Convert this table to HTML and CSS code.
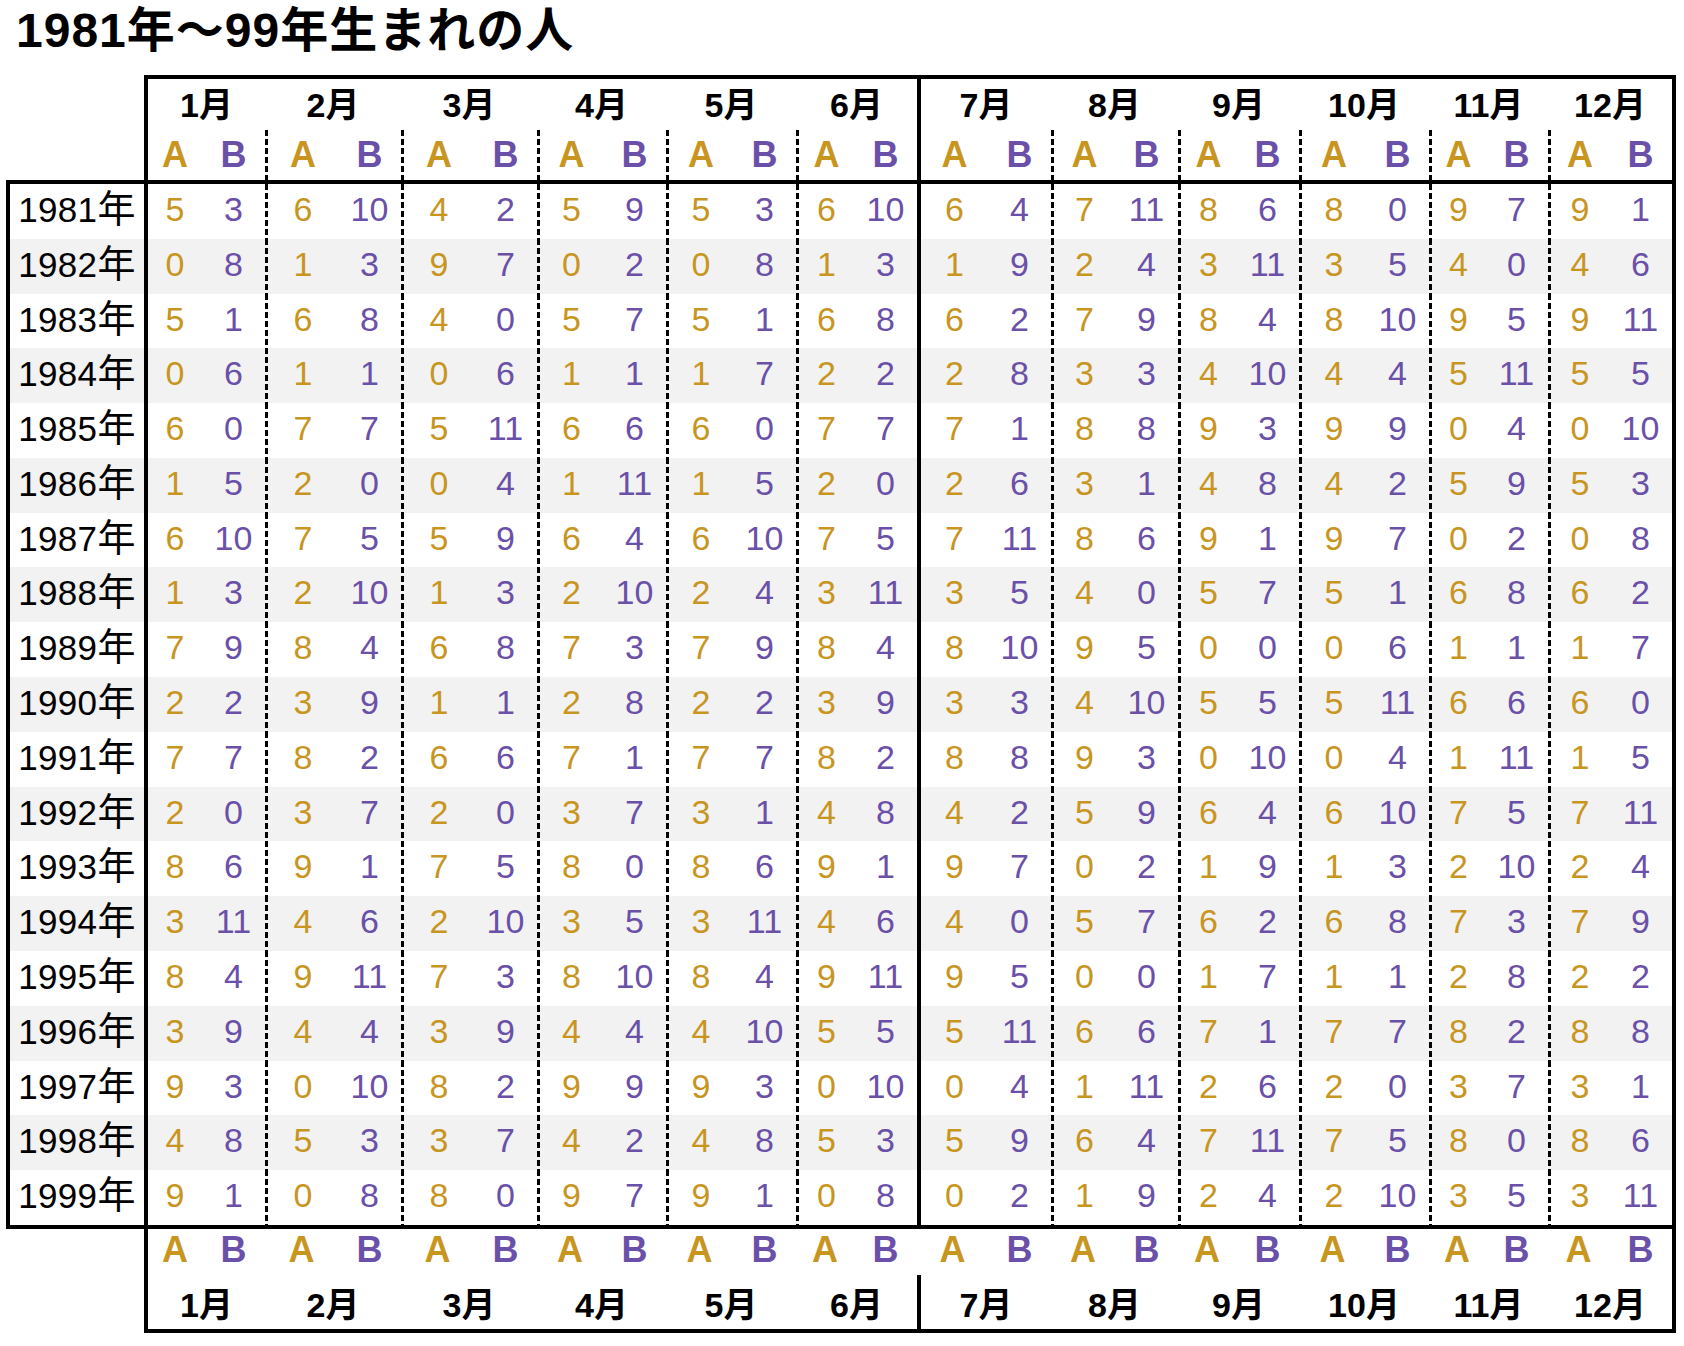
FILE: index.html
```html
<!DOCTYPE html>
<html lang="ja">
<head>
<meta charset="utf-8">
<title>1981年～99年生まれの人</title>
<link rel="stylesheet" href="styles.css">
</head>
<body>
<div class="page">
<h1 class="title">1981年～99年生まれの人</h1>

<div class="hdr">
  <div class="mrow">
    <div class="m m1">1月</div><div class="m m2">2月</div><div class="m m3">3月</div><div class="m m4">4月</div><div class="m m5">5月</div><div class="m m6">6月</div><div class="m m7 solid">7月</div><div class="m m8">8月</div><div class="m m9">9月</div><div class="m m10">10月</div><div class="m m11">11月</div><div class="m m12">12月</div>
  </div>
  <div class="abrow">
    <div class="m m1"><span class="a">A</span><span class="b">B</span></div><div class="m m2 dot"><span class="a">A</span><span class="b">B</span></div><div class="m m3 dot"><span class="a">A</span><span class="b">B</span></div><div class="m m4 dot"><span class="a">A</span><span class="b">B</span></div><div class="m m5 dot"><span class="a">A</span><span class="b">B</span></div><div class="m m6 dot"><span class="a">A</span><span class="b">B</span></div><div class="m m7 solid"><span class="a">A</span><span class="b">B</span></div><div class="m m8 dot"><span class="a">A</span><span class="b">B</span></div><div class="m m9 dot"><span class="a">A</span><span class="b">B</span></div><div class="m m10 dot"><span class="a">A</span><span class="b">B</span></div><div class="m m11 dot"><span class="a">A</span><span class="b">B</span></div><div class="m m12 dot"><span class="a">A</span><span class="b">B</span></div>
  </div>
</div>

<div class="tbl">
<div class="row"><div class="yr">1981<span class="nen">年</span></div><div class="m m1"><span class="a">5</span><span class="b">3</span></div><div class="m m2 dot"><span class="a">6</span><span class="b">10</span></div><div class="m m3 dot"><span class="a">4</span><span class="b">2</span></div><div class="m m4 dot"><span class="a">5</span><span class="b">9</span></div><div class="m m5 dot"><span class="a">5</span><span class="b">3</span></div><div class="m m6 dot"><span class="a">6</span><span class="b">10</span></div><div class="m m7 solid"><span class="a">6</span><span class="b">4</span></div><div class="m m8 dot"><span class="a">7</span><span class="b">11</span></div><div class="m m9 dot"><span class="a">8</span><span class="b">6</span></div><div class="m m10 dot"><span class="a">8</span><span class="b">0</span></div><div class="m m11 dot"><span class="a">9</span><span class="b">7</span></div><div class="m m12 dot"><span class="a">9</span><span class="b">1</span></div></div>
<div class="row alt"><div class="yr">1982<span class="nen">年</span></div><div class="m m1"><span class="a">0</span><span class="b">8</span></div><div class="m m2 dot"><span class="a">1</span><span class="b">3</span></div><div class="m m3 dot"><span class="a">9</span><span class="b">7</span></div><div class="m m4 dot"><span class="a">0</span><span class="b">2</span></div><div class="m m5 dot"><span class="a">0</span><span class="b">8</span></div><div class="m m6 dot"><span class="a">1</span><span class="b">3</span></div><div class="m m7 solid"><span class="a">1</span><span class="b">9</span></div><div class="m m8 dot"><span class="a">2</span><span class="b">4</span></div><div class="m m9 dot"><span class="a">3</span><span class="b">11</span></div><div class="m m10 dot"><span class="a">3</span><span class="b">5</span></div><div class="m m11 dot"><span class="a">4</span><span class="b">0</span></div><div class="m m12 dot"><span class="a">4</span><span class="b">6</span></div></div>
<div class="row"><div class="yr">1983<span class="nen">年</span></div><div class="m m1"><span class="a">5</span><span class="b">1</span></div><div class="m m2 dot"><span class="a">6</span><span class="b">8</span></div><div class="m m3 dot"><span class="a">4</span><span class="b">0</span></div><div class="m m4 dot"><span class="a">5</span><span class="b">7</span></div><div class="m m5 dot"><span class="a">5</span><span class="b">1</span></div><div class="m m6 dot"><span class="a">6</span><span class="b">8</span></div><div class="m m7 solid"><span class="a">6</span><span class="b">2</span></div><div class="m m8 dot"><span class="a">7</span><span class="b">9</span></div><div class="m m9 dot"><span class="a">8</span><span class="b">4</span></div><div class="m m10 dot"><span class="a">8</span><span class="b">10</span></div><div class="m m11 dot"><span class="a">9</span><span class="b">5</span></div><div class="m m12 dot"><span class="a">9</span><span class="b">11</span></div></div>
<div class="row alt"><div class="yr">1984<span class="nen">年</span></div><div class="m m1"><span class="a">0</span><span class="b">6</span></div><div class="m m2 dot"><span class="a">1</span><span class="b">1</span></div><div class="m m3 dot"><span class="a">0</span><span class="b">6</span></div><div class="m m4 dot"><span class="a">1</span><span class="b">1</span></div><div class="m m5 dot"><span class="a">1</span><span class="b">7</span></div><div class="m m6 dot"><span class="a">2</span><span class="b">2</span></div><div class="m m7 solid"><span class="a">2</span><span class="b">8</span></div><div class="m m8 dot"><span class="a">3</span><span class="b">3</span></div><div class="m m9 dot"><span class="a">4</span><span class="b">10</span></div><div class="m m10 dot"><span class="a">4</span><span class="b">4</span></div><div class="m m11 dot"><span class="a">5</span><span class="b">11</span></div><div class="m m12 dot"><span class="a">5</span><span class="b">5</span></div></div>
<div class="row"><div class="yr">1985<span class="nen">年</span></div><div class="m m1"><span class="a">6</span><span class="b">0</span></div><div class="m m2 dot"><span class="a">7</span><span class="b">7</span></div><div class="m m3 dot"><span class="a">5</span><span class="b">11</span></div><div class="m m4 dot"><span class="a">6</span><span class="b">6</span></div><div class="m m5 dot"><span class="a">6</span><span class="b">0</span></div><div class="m m6 dot"><span class="a">7</span><span class="b">7</span></div><div class="m m7 solid"><span class="a">7</span><span class="b">1</span></div><div class="m m8 dot"><span class="a">8</span><span class="b">8</span></div><div class="m m9 dot"><span class="a">9</span><span class="b">3</span></div><div class="m m10 dot"><span class="a">9</span><span class="b">9</span></div><div class="m m11 dot"><span class="a">0</span><span class="b">4</span></div><div class="m m12 dot"><span class="a">0</span><span class="b">10</span></div></div>
<div class="row alt"><div class="yr">1986<span class="nen">年</span></div><div class="m m1"><span class="a">1</span><span class="b">5</span></div><div class="m m2 dot"><span class="a">2</span><span class="b">0</span></div><div class="m m3 dot"><span class="a">0</span><span class="b">4</span></div><div class="m m4 dot"><span class="a">1</span><span class="b">11</span></div><div class="m m5 dot"><span class="a">1</span><span class="b">5</span></div><div class="m m6 dot"><span class="a">2</span><span class="b">0</span></div><div class="m m7 solid"><span class="a">2</span><span class="b">6</span></div><div class="m m8 dot"><span class="a">3</span><span class="b">1</span></div><div class="m m9 dot"><span class="a">4</span><span class="b">8</span></div><div class="m m10 dot"><span class="a">4</span><span class="b">2</span></div><div class="m m11 dot"><span class="a">5</span><span class="b">9</span></div><div class="m m12 dot"><span class="a">5</span><span class="b">3</span></div></div>
<div class="row"><div class="yr">1987<span class="nen">年</span></div><div class="m m1"><span class="a">6</span><span class="b">10</span></div><div class="m m2 dot"><span class="a">7</span><span class="b">5</span></div><div class="m m3 dot"><span class="a">5</span><span class="b">9</span></div><div class="m m4 dot"><span class="a">6</span><span class="b">4</span></div><div class="m m5 dot"><span class="a">6</span><span class="b">10</span></div><div class="m m6 dot"><span class="a">7</span><span class="b">5</span></div><div class="m m7 solid"><span class="a">7</span><span class="b">11</span></div><div class="m m8 dot"><span class="a">8</span><span class="b">6</span></div><div class="m m9 dot"><span class="a">9</span><span class="b">1</span></div><div class="m m10 dot"><span class="a">9</span><span class="b">7</span></div><div class="m m11 dot"><span class="a">0</span><span class="b">2</span></div><div class="m m12 dot"><span class="a">0</span><span class="b">8</span></div></div>
<div class="row alt"><div class="yr">1988<span class="nen">年</span></div><div class="m m1"><span class="a">1</span><span class="b">3</span></div><div class="m m2 dot"><span class="a">2</span><span class="b">10</span></div><div class="m m3 dot"><span class="a">1</span><span class="b">3</span></div><div class="m m4 dot"><span class="a">2</span><span class="b">10</span></div><div class="m m5 dot"><span class="a">2</span><span class="b">4</span></div><div class="m m6 dot"><span class="a">3</span><span class="b">11</span></div><div class="m m7 solid"><span class="a">3</span><span class="b">5</span></div><div class="m m8 dot"><span class="a">4</span><span class="b">0</span></div><div class="m m9 dot"><span class="a">5</span><span class="b">7</span></div><div class="m m10 dot"><span class="a">5</span><span class="b">1</span></div><div class="m m11 dot"><span class="a">6</span><span class="b">8</span></div><div class="m m12 dot"><span class="a">6</span><span class="b">2</span></div></div>
<div class="row"><div class="yr">1989<span class="nen">年</span></div><div class="m m1"><span class="a">7</span><span class="b">9</span></div><div class="m m2 dot"><span class="a">8</span><span class="b">4</span></div><div class="m m3 dot"><span class="a">6</span><span class="b">8</span></div><div class="m m4 dot"><span class="a">7</span><span class="b">3</span></div><div class="m m5 dot"><span class="a">7</span><span class="b">9</span></div><div class="m m6 dot"><span class="a">8</span><span class="b">4</span></div><div class="m m7 solid"><span class="a">8</span><span class="b">10</span></div><div class="m m8 dot"><span class="a">9</span><span class="b">5</span></div><div class="m m9 dot"><span class="a">0</span><span class="b">0</span></div><div class="m m10 dot"><span class="a">0</span><span class="b">6</span></div><div class="m m11 dot"><span class="a">1</span><span class="b">1</span></div><div class="m m12 dot"><span class="a">1</span><span class="b">7</span></div></div>
<div class="row alt"><div class="yr">1990<span class="nen">年</span></div><div class="m m1"><span class="a">2</span><span class="b">2</span></div><div class="m m2 dot"><span class="a">3</span><span class="b">9</span></div><div class="m m3 dot"><span class="a">1</span><span class="b">1</span></div><div class="m m4 dot"><span class="a">2</span><span class="b">8</span></div><div class="m m5 dot"><span class="a">2</span><span class="b">2</span></div><div class="m m6 dot"><span class="a">3</span><span class="b">9</span></div><div class="m m7 solid"><span class="a">3</span><span class="b">3</span></div><div class="m m8 dot"><span class="a">4</span><span class="b">10</span></div><div class="m m9 dot"><span class="a">5</span><span class="b">5</span></div><div class="m m10 dot"><span class="a">5</span><span class="b">11</span></div><div class="m m11 dot"><span class="a">6</span><span class="b">6</span></div><div class="m m12 dot"><span class="a">6</span><span class="b">0</span></div></div>
<div class="row"><div class="yr">1991<span class="nen">年</span></div><div class="m m1"><span class="a">7</span><span class="b">7</span></div><div class="m m2 dot"><span class="a">8</span><span class="b">2</span></div><div class="m m3 dot"><span class="a">6</span><span class="b">6</span></div><div class="m m4 dot"><span class="a">7</span><span class="b">1</span></div><div class="m m5 dot"><span class="a">7</span><span class="b">7</span></div><div class="m m6 dot"><span class="a">8</span><span class="b">2</span></div><div class="m m7 solid"><span class="a">8</span><span class="b">8</span></div><div class="m m8 dot"><span class="a">9</span><span class="b">3</span></div><div class="m m9 dot"><span class="a">0</span><span class="b">10</span></div><div class="m m10 dot"><span class="a">0</span><span class="b">4</span></div><div class="m m11 dot"><span class="a">1</span><span class="b">11</span></div><div class="m m12 dot"><span class="a">1</span><span class="b">5</span></div></div>
<div class="row alt"><div class="yr">1992<span class="nen">年</span></div><div class="m m1"><span class="a">2</span><span class="b">0</span></div><div class="m m2 dot"><span class="a">3</span><span class="b">7</span></div><div class="m m3 dot"><span class="a">2</span><span class="b">0</span></div><div class="m m4 dot"><span class="a">3</span><span class="b">7</span></div><div class="m m5 dot"><span class="a">3</span><span class="b">1</span></div><div class="m m6 dot"><span class="a">4</span><span class="b">8</span></div><div class="m m7 solid"><span class="a">4</span><span class="b">2</span></div><div class="m m8 dot"><span class="a">5</span><span class="b">9</span></div><div class="m m9 dot"><span class="a">6</span><span class="b">4</span></div><div class="m m10 dot"><span class="a">6</span><span class="b">10</span></div><div class="m m11 dot"><span class="a">7</span><span class="b">5</span></div><div class="m m12 dot"><span class="a">7</span><span class="b">11</span></div></div>
<div class="row"><div class="yr">1993<span class="nen">年</span></div><div class="m m1"><span class="a">8</span><span class="b">6</span></div><div class="m m2 dot"><span class="a">9</span><span class="b">1</span></div><div class="m m3 dot"><span class="a">7</span><span class="b">5</span></div><div class="m m4 dot"><span class="a">8</span><span class="b">0</span></div><div class="m m5 dot"><span class="a">8</span><span class="b">6</span></div><div class="m m6 dot"><span class="a">9</span><span class="b">1</span></div><div class="m m7 solid"><span class="a">9</span><span class="b">7</span></div><div class="m m8 dot"><span class="a">0</span><span class="b">2</span></div><div class="m m9 dot"><span class="a">1</span><span class="b">9</span></div><div class="m m10 dot"><span class="a">1</span><span class="b">3</span></div><div class="m m11 dot"><span class="a">2</span><span class="b">10</span></div><div class="m m12 dot"><span class="a">2</span><span class="b">4</span></div></div>
<div class="row alt"><div class="yr">1994<span class="nen">年</span></div><div class="m m1"><span class="a">3</span><span class="b">11</span></div><div class="m m2 dot"><span class="a">4</span><span class="b">6</span></div><div class="m m3 dot"><span class="a">2</span><span class="b">10</span></div><div class="m m4 dot"><span class="a">3</span><span class="b">5</span></div><div class="m m5 dot"><span class="a">3</span><span class="b">11</span></div><div class="m m6 dot"><span class="a">4</span><span class="b">6</span></div><div class="m m7 solid"><span class="a">4</span><span class="b">0</span></div><div class="m m8 dot"><span class="a">5</span><span class="b">7</span></div><div class="m m9 dot"><span class="a">6</span><span class="b">2</span></div><div class="m m10 dot"><span class="a">6</span><span class="b">8</span></div><div class="m m11 dot"><span class="a">7</span><span class="b">3</span></div><div class="m m12 dot"><span class="a">7</span><span class="b">9</span></div></div>
<div class="row"><div class="yr">1995<span class="nen">年</span></div><div class="m m1"><span class="a">8</span><span class="b">4</span></div><div class="m m2 dot"><span class="a">9</span><span class="b">11</span></div><div class="m m3 dot"><span class="a">7</span><span class="b">3</span></div><div class="m m4 dot"><span class="a">8</span><span class="b">10</span></div><div class="m m5 dot"><span class="a">8</span><span class="b">4</span></div><div class="m m6 dot"><span class="a">9</span><span class="b">11</span></div><div class="m m7 solid"><span class="a">9</span><span class="b">5</span></div><div class="m m8 dot"><span class="a">0</span><span class="b">0</span></div><div class="m m9 dot"><span class="a">1</span><span class="b">7</span></div><div class="m m10 dot"><span class="a">1</span><span class="b">1</span></div><div class="m m11 dot"><span class="a">2</span><span class="b">8</span></div><div class="m m12 dot"><span class="a">2</span><span class="b">2</span></div></div>
<div class="row alt"><div class="yr">1996<span class="nen">年</span></div><div class="m m1"><span class="a">3</span><span class="b">9</span></div><div class="m m2 dot"><span class="a">4</span><span class="b">4</span></div><div class="m m3 dot"><span class="a">3</span><span class="b">9</span></div><div class="m m4 dot"><span class="a">4</span><span class="b">4</span></div><div class="m m5 dot"><span class="a">4</span><span class="b">10</span></div><div class="m m6 dot"><span class="a">5</span><span class="b">5</span></div><div class="m m7 solid"><span class="a">5</span><span class="b">11</span></div><div class="m m8 dot"><span class="a">6</span><span class="b">6</span></div><div class="m m9 dot"><span class="a">7</span><span class="b">1</span></div><div class="m m10 dot"><span class="a">7</span><span class="b">7</span></div><div class="m m11 dot"><span class="a">8</span><span class="b">2</span></div><div class="m m12 dot"><span class="a">8</span><span class="b">8</span></div></div>
<div class="row"><div class="yr">1997<span class="nen">年</span></div><div class="m m1"><span class="a">9</span><span class="b">3</span></div><div class="m m2 dot"><span class="a">0</span><span class="b">10</span></div><div class="m m3 dot"><span class="a">8</span><span class="b">2</span></div><div class="m m4 dot"><span class="a">9</span><span class="b">9</span></div><div class="m m5 dot"><span class="a">9</span><span class="b">3</span></div><div class="m m6 dot"><span class="a">0</span><span class="b">10</span></div><div class="m m7 solid"><span class="a">0</span><span class="b">4</span></div><div class="m m8 dot"><span class="a">1</span><span class="b">11</span></div><div class="m m9 dot"><span class="a">2</span><span class="b">6</span></div><div class="m m10 dot"><span class="a">2</span><span class="b">0</span></div><div class="m m11 dot"><span class="a">3</span><span class="b">7</span></div><div class="m m12 dot"><span class="a">3</span><span class="b">1</span></div></div>
<div class="row alt"><div class="yr">1998<span class="nen">年</span></div><div class="m m1"><span class="a">4</span><span class="b">8</span></div><div class="m m2 dot"><span class="a">5</span><span class="b">3</span></div><div class="m m3 dot"><span class="a">3</span><span class="b">7</span></div><div class="m m4 dot"><span class="a">4</span><span class="b">2</span></div><div class="m m5 dot"><span class="a">4</span><span class="b">8</span></div><div class="m m6 dot"><span class="a">5</span><span class="b">3</span></div><div class="m m7 solid"><span class="a">5</span><span class="b">9</span></div><div class="m m8 dot"><span class="a">6</span><span class="b">4</span></div><div class="m m9 dot"><span class="a">7</span><span class="b">11</span></div><div class="m m10 dot"><span class="a">7</span><span class="b">5</span></div><div class="m m11 dot"><span class="a">8</span><span class="b">0</span></div><div class="m m12 dot"><span class="a">8</span><span class="b">6</span></div></div>
<div class="row"><div class="yr">1999<span class="nen">年</span></div><div class="m m1"><span class="a">9</span><span class="b">1</span></div><div class="m m2 dot"><span class="a">0</span><span class="b">8</span></div><div class="m m3 dot"><span class="a">8</span><span class="b">0</span></div><div class="m m4 dot"><span class="a">9</span><span class="b">7</span></div><div class="m m5 dot"><span class="a">9</span><span class="b">1</span></div><div class="m m6 dot"><span class="a">0</span><span class="b">8</span></div><div class="m m7 solid"><span class="a">0</span><span class="b">2</span></div><div class="m m8 dot"><span class="a">1</span><span class="b">9</span></div><div class="m m9 dot"><span class="a">2</span><span class="b">4</span></div><div class="m m10 dot"><span class="a">2</span><span class="b">10</span></div><div class="m m11 dot"><span class="a">3</span><span class="b">5</span></div><div class="m m12 dot"><span class="a">3</span><span class="b">11</span></div></div>
</div>

<div class="ftr">
  <div class="abrow fab">
    <div class="m m1"><span class="a">A</span><span class="b">B</span></div><div class="m m2"><span class="a">A</span><span class="b">B</span></div><div class="m m3"><span class="a">A</span><span class="b">B</span></div><div class="m m4"><span class="a">A</span><span class="b">B</span></div><div class="m m5"><span class="a">A</span><span class="b">B</span></div><div class="m m6"><span class="a">A</span><span class="b">B</span></div><div class="m m7"><span class="a">A</span><span class="b">B</span></div><div class="m m8"><span class="a">A</span><span class="b">B</span></div><div class="m m9"><span class="a">A</span><span class="b">B</span></div><div class="m m10"><span class="a">A</span><span class="b">B</span></div><div class="m m11"><span class="a">A</span><span class="b">B</span></div><div class="m m12"><span class="a">A</span><span class="b">B</span></div>
  </div>
  <div class="mrow fm">
    <div class="m m1">1月</div><div class="m m2">2月</div><div class="m m3">3月</div><div class="m m4">4月</div><div class="m m5">5月</div><div class="m m6">6月</div><div class="m m7 solid">7月</div><div class="m m8">8月</div><div class="m m9">9月</div><div class="m m10">10月</div><div class="m m11">11月</div><div class="m m12">12月</div>
  </div>
</div>
</div>
</body>
</html>
```

FILE: styles.css
```css
* { box-sizing: border-box; }

html, body {
  margin: 0;
  padding: 0;
  background: #ffffff;
}

body {
  font-family: "Liberation Sans", "Noto Sans CJK JP", sans-serif;
  color: #000;
}

.page {
  padding-top: 3px;
  width: 1684px;
}

.title {
  margin: 0 0 16px 16px;
  font-size: 48px;
  line-height: 56px;
  font-weight: bold;
  letter-spacing: 1px;
}

/* month width grid */
.m { display: flex; flex: none; }
.m1 { width: 117px; }
.m2 { width: 136px; }
.m3 { width: 136px; }
.m4 { width: 129px; }
.m5 { width: 130px; }
.m6 { width: 121px; }
.m7 { width: 134px; }
.m8 { width: 127px; }
.m9 { width: 121px; }
.m10 { width: 130px; }
.m11 { width: 119px; }
.m12 { width: 124px; }

.a {
  flex: 1;
  text-align: center;
  color: #c8951f;
}
.b {
  flex: none;
  width: 63px;
  text-align: center;
  color: #6a50a8;
}

.dot {
  padding-left: 3px;
  background-image: linear-gradient(to bottom, #000 0, #000 6px, transparent 6px);
  background-size: 3px 9px;
  background-repeat: repeat-y;
  background-position: left top;
}
.solid {
  border-left: 4px solid #000;
}

/* header box */
.hdr {
  margin-left: 144px;
  width: 1532px;
  border: 4px solid #000;
  border-bottom: none;
  display: flex;
  flex-direction: column;
}

.mrow {
  display: flex;
  height: 51px;
  font-size: 34px;
  font-weight: bold;
  line-height: 53px;
}
.mrow .m { justify-content: center; }

.abrow {
  display: flex;
  height: 50px;
  font-size: 36px;
  font-weight: bold;
  line-height: 50px;
}

/* body table */
.tbl {
  margin-left: 6px;
  width: 1670px;
  border: 4px solid #000;
  display: flex;
  flex-direction: column;
}

.row {
  display: flex;
  align-items: flex-start;
  height: 54.79px;
  line-height: 50px;
  font-size: 34px;
  background: #fff;
}
.row .m { align-self: stretch; }
.row.alt { background: #f2f2f2; }

.yr {
  flex: none;
  align-self: stretch;
  width: 138px;
  border-right: 4px solid #000;
  text-align: center;
  color: #000;
  font-size: 35px;
  letter-spacing: 0.3px;
}
.nen { font-size: 38px; }

/* footer box */
.ftr {
  margin-left: 144px;
  width: 1532px;
  border: 4px solid #000;
  border-top: none;
  display: flex;
  flex-direction: column;
}
.fab { height: 46px; line-height: 42px; }
.fm { height: 54px; line-height: 60px; }
```
